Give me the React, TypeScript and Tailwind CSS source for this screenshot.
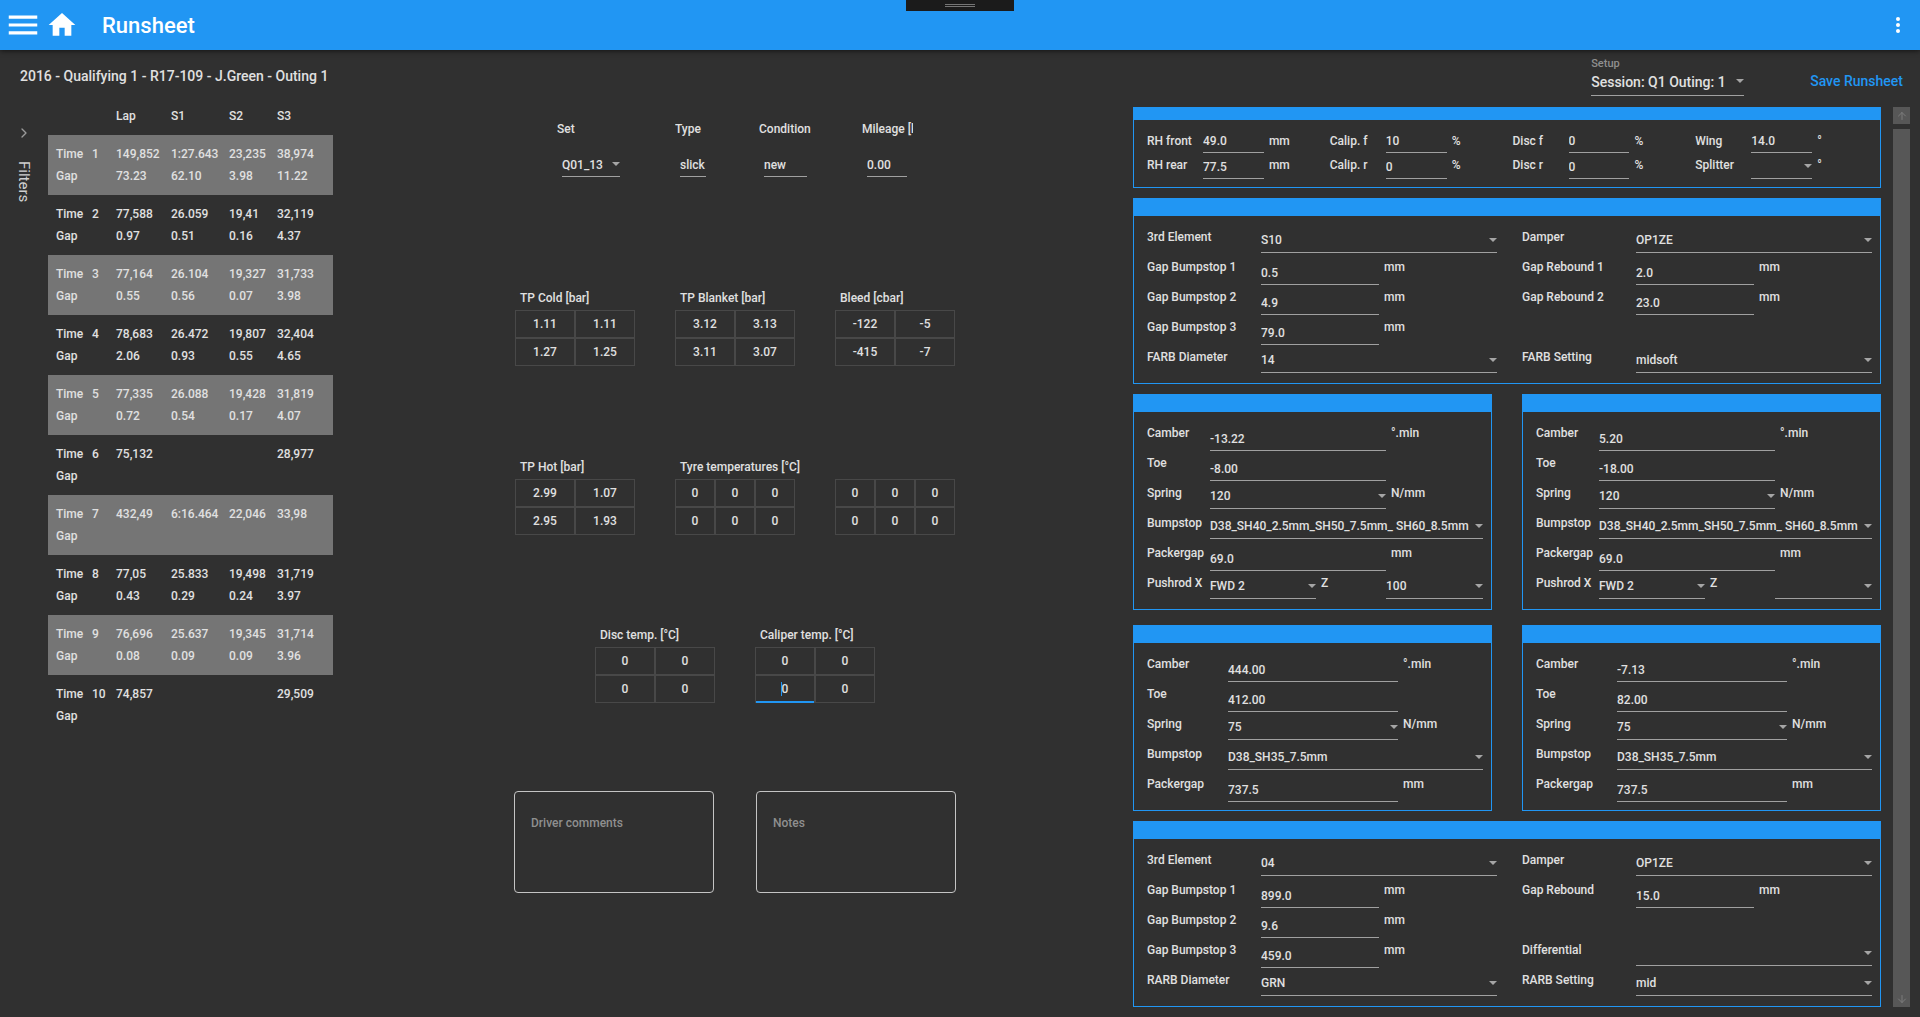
import { useId } from "react";
import type { ReactNode } from "react";
import { ArrowDown, ArrowUp, ChevronRight } from "lucide-react";

function Caret({ className = "" }: { className?: string }) {
  return (
    <svg viewBox="0 0 8 4" className={`pointer-events-none absolute right-0 h-1 w-2 fill-[#a5a5a5] ${className}`} aria-hidden="true">
      <path d="M0 0H8L4 4Z" />
    </svg>
  );
}

const line = "block w-full min-w-0 rounded-none border-b border-[#a0a0a0] bg-transparent outline-none";

type FieldProps = {
  label: string;
  value: string;
  select?: boolean;
  unit?: string;
  /** Grid columns taken by the control. */
  span?: string;
  size?: "normal" | "short" | "medium";
};

/** Label, control and optional unit; the three parts are placed by the surrounding grid. */
function Field({ label, value, select, unit, span = "", size = "normal" }: FieldProps) {
  const id = useId();
  const inputSize = size === "short" ? "h-6" : size === "medium" ? "h-[26px] pt-0.5" : "h-[30px] pt-1.5";
  const selectSize = size === "medium" ? "h-[26px]" : "h-7 pt-0.5";
  return (
    <>
      <label htmlFor={id} className="whitespace-nowrap leading-6">
        {label}
      </label>
      <div className={`relative ${span}`}>
        {select ? (
          <>
            <select id={id} defaultValue={value} className={`${line} appearance-none ${selectSize}`}>
              <option>{value}</option>
            </select>
            <Caret className={size === "medium" ? "top-[11px]" : "top-[13px]"} />
          </>
        ) : (
          <input id={id} defaultValue={value} className={`${line} ${inputSize}`} />
        )}
      </div>
      {unit !== undefined && <span className="pl-[5px] leading-6">{unit}</span>}
    </>
  );
}

function Panel({ thin, children }: { thin?: boolean; children: ReactNode }) {
  return (
    <section className="border border-t-0 border-[#2196f3]">
      <div className={`bg-[#2196f3] ${thin ? "h-[13px]" : "h-[18px]"}`} />
      <div className="pt-[9px] pr-2 pb-2 pl-[13px]">{children}</div>
    </section>
  );
}

type Cell = { label: string; value: string; select?: boolean; unit?: string } | null;

function RideGroup({ rows }: { rows: { label: string; value: string; unit: string; select?: boolean }[] }) {
  return (
    <div className="grid grid-cols-[56px_minmax(0,61fr)_minmax(0,66fr)] grid-rows-[24px_26px]">
      {rows.map((row, i) => (
        <Field key={row.label} {...row} size={i === 0 ? "short" : "medium"} />
      ))}
    </div>
  );
}

function AxleColumn({ cells }: { cells: Cell[] }) {
  return (
    <div className="flex flex-col">
      {cells.map((cell, i) => (
        <div key={i} className="grid h-[30px] grid-cols-[114px_minmax(0,1fr)_minmax(0,1fr)]">
          {cell && <Field {...cell} span={cell.select ? "col-span-2" : ""} />}
        </div>
      ))}
    </div>
  );
}

function AxlePanel({ left, right }: { left: Cell[]; right: Cell[] }) {
  return (
    <Panel>
      <div className="grid grid-cols-2 gap-x-[25px]">
        <AxleColumn cells={left} />
        <AxleColumn cells={right} />
      </div>
    </Panel>
  );
}

function FrontCorner({ camber, toe, z }: { camber: string; toe: string; z: string }) {
  return (
    <Panel>
      <div className="grid auto-rows-[30px] grid-cols-[63px_minmax(0,106fr)_minmax(0,70fr)_minmax(0,97fr)]">
        <Field label="Camber" value={camber} span="col-span-2" unit="°.min" />
        <Field label="Toe" value={toe} span="col-span-2" unit="" />
        <Field label="Spring" value="120" select span="col-span-2" unit="N/mm" />
        <Field label="Bumpstop" value="D38_SH40_2.5mm_SH50_7.5mm_ SH60_8.5mm" select span="col-span-3" />
        <Field label="Packergap" value="69.0" span="col-span-2" unit="mm" />
        <Field label="Pushrod X" value="FWD 2" select />
        <div className="contents [&>label]:pl-[5px]">
          <Field label="Z" value={z} select />
        </div>
      </div>
    </Panel>
  );
}

function RearCorner({ camber, toe }: { camber: string; toe: string }) {
  return (
    <Panel>
      <div className="grid auto-rows-[30px] grid-cols-[81px_minmax(0,2fr)_minmax(0,1fr)]">
        <Field label="Camber" value={camber} unit="°.min" />
        <Field label="Toe" value={toe} unit="" />
        <Field label="Spring" value="75" select unit="N/mm" />
        <Field label="Bumpstop" value="D38_SH35_7.5mm" select span="col-span-2" />
        <Field label="Packergap" value="737.5" unit="mm" />
      </div>
    </Panel>
  );
}

const laps = [
  { time: ["149,852", "1:27.643", "23,235", "38,974"], gap: ["73.23", "62.10", "3.98", "11.22"] },
  { time: ["77,588", "26.059", "19,41", "32,119"], gap: ["0.97", "0.51", "0.16", "4.37"] },
  { time: ["77,164", "26.104", "19,327", "31,733"], gap: ["0.55", "0.56", "0.07", "3.98"] },
  { time: ["78,683", "26.472", "19,807", "32,404"], gap: ["2.06", "0.93", "0.55", "4.65"] },
  { time: ["77,335", "26.088", "19,428", "31,819"], gap: ["0.72", "0.54", "0.17", "4.07"] },
  { time: ["75,132", "", "", "28,977"], gap: ["", "", "", ""] },
  { time: ["432,49", "6:16.464", "22,046", "33,98"], gap: ["", "", "", ""] },
  { time: ["77,05", "25.833", "19,498", "31,719"], gap: ["0.43", "0.29", "0.24", "3.97"] },
  { time: ["76,696", "25.637", "19,345", "31,714"], gap: ["0.08", "0.09", "0.09", "3.96"] },
  { time: ["74,857", "", "", "29,509"], gap: ["", "", "", ""] },
];

function LapTable() {
  return (
    <table className="w-[285px] table-fixed border-collapse text-left leading-[22px]">
      <colgroup>
        <col className="w-11" />
        <col className="w-6" />
        <col className="w-[55px]" />
        <col className="w-[58px]" />
        <col className="w-12" />
        <col />
      </colgroup>
      <thead>
        <tr className="h-[38px]">
          <td />
          <td />
          {["Lap", "S1", "S2", "S3"].map((h) => (
            <th key={h} scope="col" className="p-0 font-medium">
              {h}
            </th>
          ))}
        </tr>
      </thead>
      {laps.map((lap, i) => (
        <tbody key={i} className={i % 2 === 0 ? "bg-[#757575]" : ""}>
          <tr className="h-[30px] align-bottom">
            <th scope="row" className="p-0 pl-2 font-medium">
              Time
            </th>
            <td className="p-0">{i + 1}</td>
            {lap.time.map((v, k) => (
              <td key={k} className="p-0">
                {v}
              </td>
            ))}
          </tr>
          <tr className="h-[30px] align-top">
            <th scope="row" className="p-0 pl-2 font-medium">
              Gap
            </th>
            <td />
            {lap.gap.map((v, k) => (
              <td key={k} className="p-0">
                {v}
              </td>
            ))}
          </tr>
        </tbody>
      ))}
    </table>
  );
}

function CellGrid({ title, values, three, focused }: { title: string; values: string[]; three?: boolean; focused?: number }) {
  return (
    <fieldset className="w-[120px] min-w-0 shrink-0">
      <legend className="h-6 pl-[5px] leading-6 whitespace-nowrap">{title}</legend>
      <div className={`grid ${three ? "grid-cols-3" : "grid-cols-2"}`}>
        {values.map((v, i) => (
          <div key={i} className="relative h-7 border border-[#484848]">
            <input
              aria-label={`${title || "Tyre temperatures"} ${i + 1}`}
              defaultValue={v}
              className={`block w-full bg-transparent text-center outline-none ${
                focused === i ? "h-[27px] border-b-2 border-[#2196f3]" : "h-[26px] pb-px"
              }`}
            />
            {focused === i && <span className="absolute top-1.5 left-[25px] h-3.5 w-px bg-[#2196f3]" />}
          </div>
        ))}
      </div>
    </fieldset>
  );
}

function TyreField({ label, value, select, column, width }: { label: string; value: string; select?: boolean; column: string; width: string }) {
  const id = useId();
  return (
    <div className={column}>
      <label htmlFor={id} className="block overflow-hidden leading-6 whitespace-nowrap">
        {label}
      </label>
      <div className={`relative mt-3 ml-[5px] ${width}`}>
        {select ? (
          <>
            <select id={id} defaultValue={value} className={`${line} h-6 appearance-none`}>
              <option>{value}</option>
            </select>
            <Caret className="top-[9px]" />
          </>
        ) : (
          <input id={id} defaultValue={value} className={`${line} h-6`} />
        )}
      </div>
    </div>
  );
}

const commentBox =
  "block h-[102px] w-[200px] resize-none rounded border border-[#c4c4c4] bg-transparent px-4 pt-[19px] leading-6 outline-none placeholder:text-[#8f8f8f]";

export default function App() {
  return (
    <div className="flex min-h-screen flex-col bg-[#303030] font-[Roboto,sans-serif] text-xs text-[#e0e0e0]">
      <div className="flex flex-1 flex-col font-medium">
        <header className="relative z-10 flex h-[50px] items-center bg-[#2196f3] pr-[14px] pl-1 text-white shadow-[0_1px_5px_rgba(0,0,0,0.6)]">
          <button type="button" aria-label="Menu">
            <svg viewBox="0 0 24 24" className="size-[38px] fill-current">
              <path d="M3 6H21V8H3V6M3 11H21V13H3V11M3 16H21V18H3V16Z" />
            </svg>
          </button>
          <button type="button" aria-label="Home" className="ml-1">
            <svg viewBox="0 0 24 24" className="size-8 fill-current">
              <path d="M10 20V14H14V20H19V12H22L12 3L2 12H5V20H10Z" />
            </svg>
          </button>
          <h1 className="ml-6 pt-px text-[22px] font-medium">Runsheet</h1>
          <button type="button" aria-label="More options" className="ml-auto">
            <svg viewBox="0 0 16 16" className="size-4 fill-current">
              <circle cx="8" cy="2" r="2" />
              <circle cx="8" cy="8" r="2" />
              <circle cx="8" cy="14" r="2" />
            </svg>
          </button>
          <div className="absolute top-0 left-1/2 flex h-[11px] w-[108px] -translate-x-1/2 flex-col items-center gap-px bg-[#1b1b1b] pt-1">
            <span className="h-px w-[30px] bg-[#757575]" />
            <span className="h-px w-[30px] bg-[#757575]" />
          </div>
        </header>

        <main className="grid flex-1 grid-cols-[337px_minmax(440px,796fr)_minmax(700px,787fr)]">
          <div className="pt-3.5">
            <h2 className="pl-5 text-sm leading-6 font-medium whitespace-nowrap">2016 - Qualifying 1 - R17-109 - J.Green - Outing 1</h2>
            <div className="mt-[9px] flex">
              <button type="button" className="flex h-28 w-12 flex-col items-center gap-5 pt-7">
                <ChevronRight className="size-4 text-[#9a9a9a]" />
                <span className="text-[15px] leading-6 font-normal text-[#cfcfcf] [writing-mode:vertical-rl]">Filters</span>
              </button>
              <LapTable />
            </div>
          </div>

          <div className="mx-auto w-[442px] pt-[67px]">
            <div className="flex h-[169px] pl-[43px]">
              <TyreField label="Set" value="Q01_13" select column="w-[118px]" width="w-[58px]" />
              <TyreField label="Type" value="slick" column="w-[84px]" width="w-[26px]" />
              <TyreField label="Condition" value="new" column="w-[103px]" width="w-[43px]" />
              <TyreField label="Mileage [km]" value="0.00" column="w-[51px]" width="w-10" />
            </div>
            <div className="flex h-[169px] justify-center gap-10">
              <CellGrid title="TP Cold [bar]" values={["1.11", "1.11", "1.27", "1.25"]} />
              <CellGrid title="TP Blanket [bar]" values={["3.12", "3.13", "3.11", "3.07"]} />
              <CellGrid title="Bleed [cbar]" values={["-122", "-5", "-415", "-7"]} />
            </div>
            <div className="flex h-[168px] justify-center gap-10">
              <CellGrid title="TP Hot [bar]" values={["2.99", "1.07", "2.95", "1.93"]} />
              <CellGrid title="Tyre temperatures [°C]" values={["0", "0", "0", "0", "0", "0"]} three />
              <CellGrid title="" values={["0", "0", "0", "0", "0", "0"]} three />
            </div>
            <div className="flex h-[168px] justify-center gap-10">
              <CellGrid title="Disc temp. [°C]" values={["0", "0", "0", "0"]} />
              <CellGrid title="Caliper temp. [°C]" values={["0", "0", "0", "0"]} focused={2} />
            </div>
            <div className="flex justify-between">
              <textarea aria-label="Driver comments" placeholder="Driver comments" className={commentBox} />
              <textarea aria-label="Notes" placeholder="Notes" className={commentBox} />
            </div>
          </div>

          <div>
            <div className="flex h-[57px] justify-end gap-[66px] pt-2 pr-[17px]">
              <div className="w-[153px]">
                <label htmlFor="setup" className="block text-[11px] leading-3 text-[#8f8f8f]">
                  Setup
                </label>
                <div className="relative">
                  <select id="setup" defaultValue="q1" className={`${line} h-[26px] appearance-none pb-px text-sm`}>
                    <option value="q1">Session: Q1 Outing: 1</option>
                  </select>
                  <Caret className="top-[9px]" />
                </div>
              </div>
              <button type="button" className="mt-[11px] h-6 text-sm text-[#2196f3]">
                Save Runsheet
              </button>
            </div>

            <div className="flex pr-2.5">
              <div className="flex min-w-0 flex-1 flex-col gap-2.5">
                <Panel thin>
                  <div className="-mr-1.5 grid grid-cols-4">
                    <RideGroup rows={[{ label: "RH front", value: "49.0", unit: "mm" }, { label: "RH rear", value: "77.5", unit: "mm" }]} />
                    <RideGroup rows={[{ label: "Calip. f", value: "10", unit: "%" }, { label: "Calip. r", value: "0", unit: "%" }]} />
                    <RideGroup rows={[{ label: "Disc f", value: "0", unit: "%" }, { label: "Disc r", value: "0", unit: "%" }]} />
                    <RideGroup rows={[{ label: "Wing", value: "14.0", unit: "°" }, { label: "Splitter", value: "", unit: "°", select: true }]} />
                  </div>
                </Panel>
                <AxlePanel
                  left={[
                    { label: "3rd Element", value: "S10", select: true },
                    { label: "Gap Bumpstop 1", value: "0.5", unit: "mm" },
                    { label: "Gap Bumpstop 2", value: "4.9", unit: "mm" },
                    { label: "Gap Bumpstop 3", value: "79.0", unit: "mm" },
                    { label: "FARB Diameter", value: "14", select: true },
                  ]}
                  right={[
                    { label: "Damper", value: "OP1ZE", select: true },
                    { label: "Gap Rebound 1", value: "2.0", unit: "mm" },
                    { label: "Gap Rebound 2", value: "23.0", unit: "mm" },
                    null,
                    { label: "FARB Setting", value: "midsoft", select: true },
                  ]}
                />
                <div className="grid grid-cols-2 gap-x-[30px] gap-y-[15px]">
                  <FrontCorner camber="-13.22" toe="-8.00" z="100" />
                  <FrontCorner camber="5.20" toe="-18.00" z="" />
                  <RearCorner camber="444.00" toe="412.00" />
                  <RearCorner camber="-7.13" toe="82.00" />
                </div>
                <AxlePanel
                  left={[
                    { label: "3rd Element", value: "04", select: true },
                    { label: "Gap Bumpstop 1", value: "899.0", unit: "mm" },
                    { label: "Gap Bumpstop 2", value: "9.6", unit: "mm" },
                    { label: "Gap Bumpstop 3", value: "459.0", unit: "mm" },
                    { label: "RARB Diameter", value: "GRN", select: true },
                  ]}
                  right={[
                    { label: "Damper", value: "OP1ZE", select: true },
                    { label: "Gap Rebound", value: "15.0", unit: "mm" },
                    null,
                    { label: "Differential", value: "", select: true },
                    { label: "RARB Setting", value: "mid", select: true },
                  ]}
                />
              </div>
              <div className="ml-3 flex w-[17px] flex-col gap-[5px] text-[#7c7c7c]">
                <button type="button" aria-label="Scroll up" className="flex h-[17px] items-center justify-center bg-[#575757]">
                  <ArrowUp className="size-3" />
                </button>
                <div className="flex flex-1 items-end justify-center bg-[#575757]">
                  <button type="button" aria-label="Scroll down" className="flex h-[17px] items-center">
                    <ArrowDown className="size-3" />
                  </button>
                </div>
              </div>
            </div>
          </div>
        </main>
      </div>
    </div>
  );
}
